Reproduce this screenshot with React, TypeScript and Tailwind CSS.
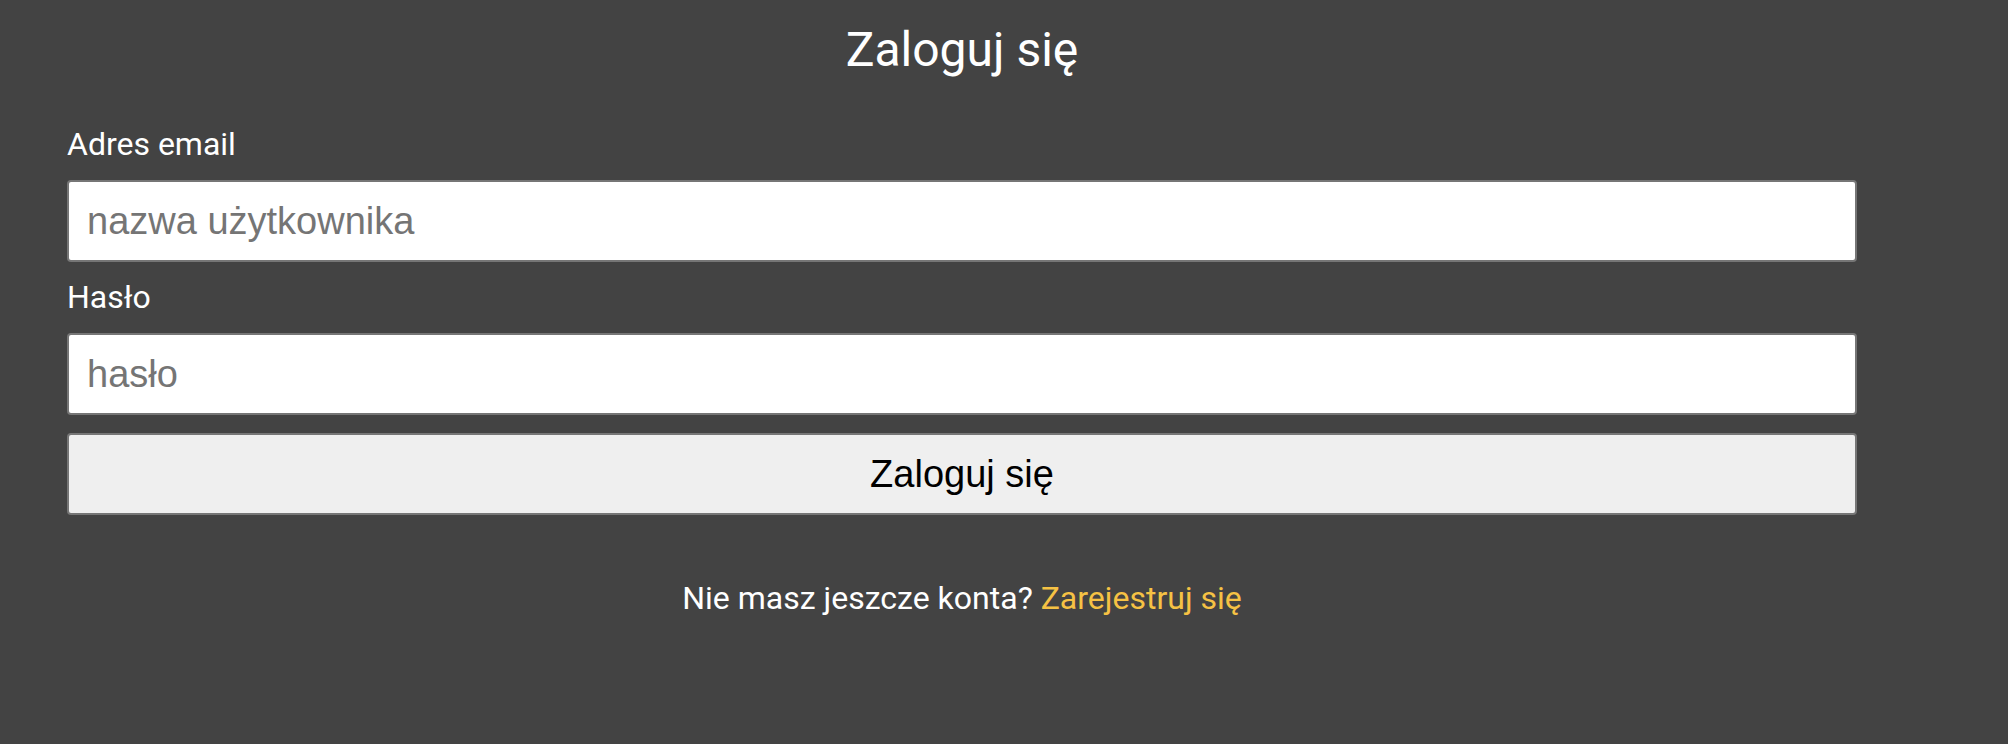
import { useState } from 'react';

const roboto = { fontFamily: 'Roboto, "Noto Sans", sans-serif' };

export default function App() {
  const [email, setEmail] = useState('');
  const [password, setPassword] = useState('');

  return (
    <div className="min-h-screen w-full bg-[#434343] pl-[67px] pr-[151px]">
      <form
        className="flex w-[1790px] flex-col"
        onSubmit={(e) => e.preventDefault()}
      >
        <h1
          className="pt-[22px] text-center text-[48px] font-normal leading-[56px] text-white"
          style={roboto}
        >
          Zaloguj się
        </h1>

        <label
          htmlFor="email"
          className="mt-[47px] mb-[17px] text-[32px] leading-[38px] text-white"
          style={roboto}
        >
          Adres email
        </label>
        <input
          id="email"
          type="email"
          value={email}
          onChange={(e) => setEmail(e.target.value)}
          placeholder="nazwa użytkownika"
          className="h-[82px] w-full rounded-[4px] border-2 border-[#767676] bg-white px-[18px] font-['Liberation_Sans',Arial,sans-serif] text-[38px] text-black outline-none placeholder:text-[#757575]"
        />

        <label
          htmlFor="password"
          className="mt-[16px] mb-[17px] text-[32px] leading-[38px] text-white"
          style={roboto}
        >
          Hasło
        </label>
        <input
          id="password"
          type="password"
          value={password}
          onChange={(e) => setPassword(e.target.value)}
          placeholder="hasło"
          className="h-[82px] w-full rounded-[4px] border-2 border-[#767676] bg-white px-[18px] font-['Liberation_Sans',Arial,sans-serif] text-[38px] text-black outline-none placeholder:text-[#757575]"
        />

        <button
          type="submit"
          className="mt-[18px] h-[82px] w-full rounded-[4px] border-2 border-[#767676] bg-[#efefef] font-['Liberation_Sans',Arial,sans-serif] text-[38px] text-black"
        >
          Zaloguj się
        </button>

        <p
          className="mt-[64px] text-center text-[32px] leading-[38px] text-white"
          style={roboto}
        >
          Nie masz jeszcze konta?{' '}
          <a href="#" className="text-[#f6c244]">
            Zarejestruj się
          </a>
        </p>
      </form>
    </div>
  );
}
